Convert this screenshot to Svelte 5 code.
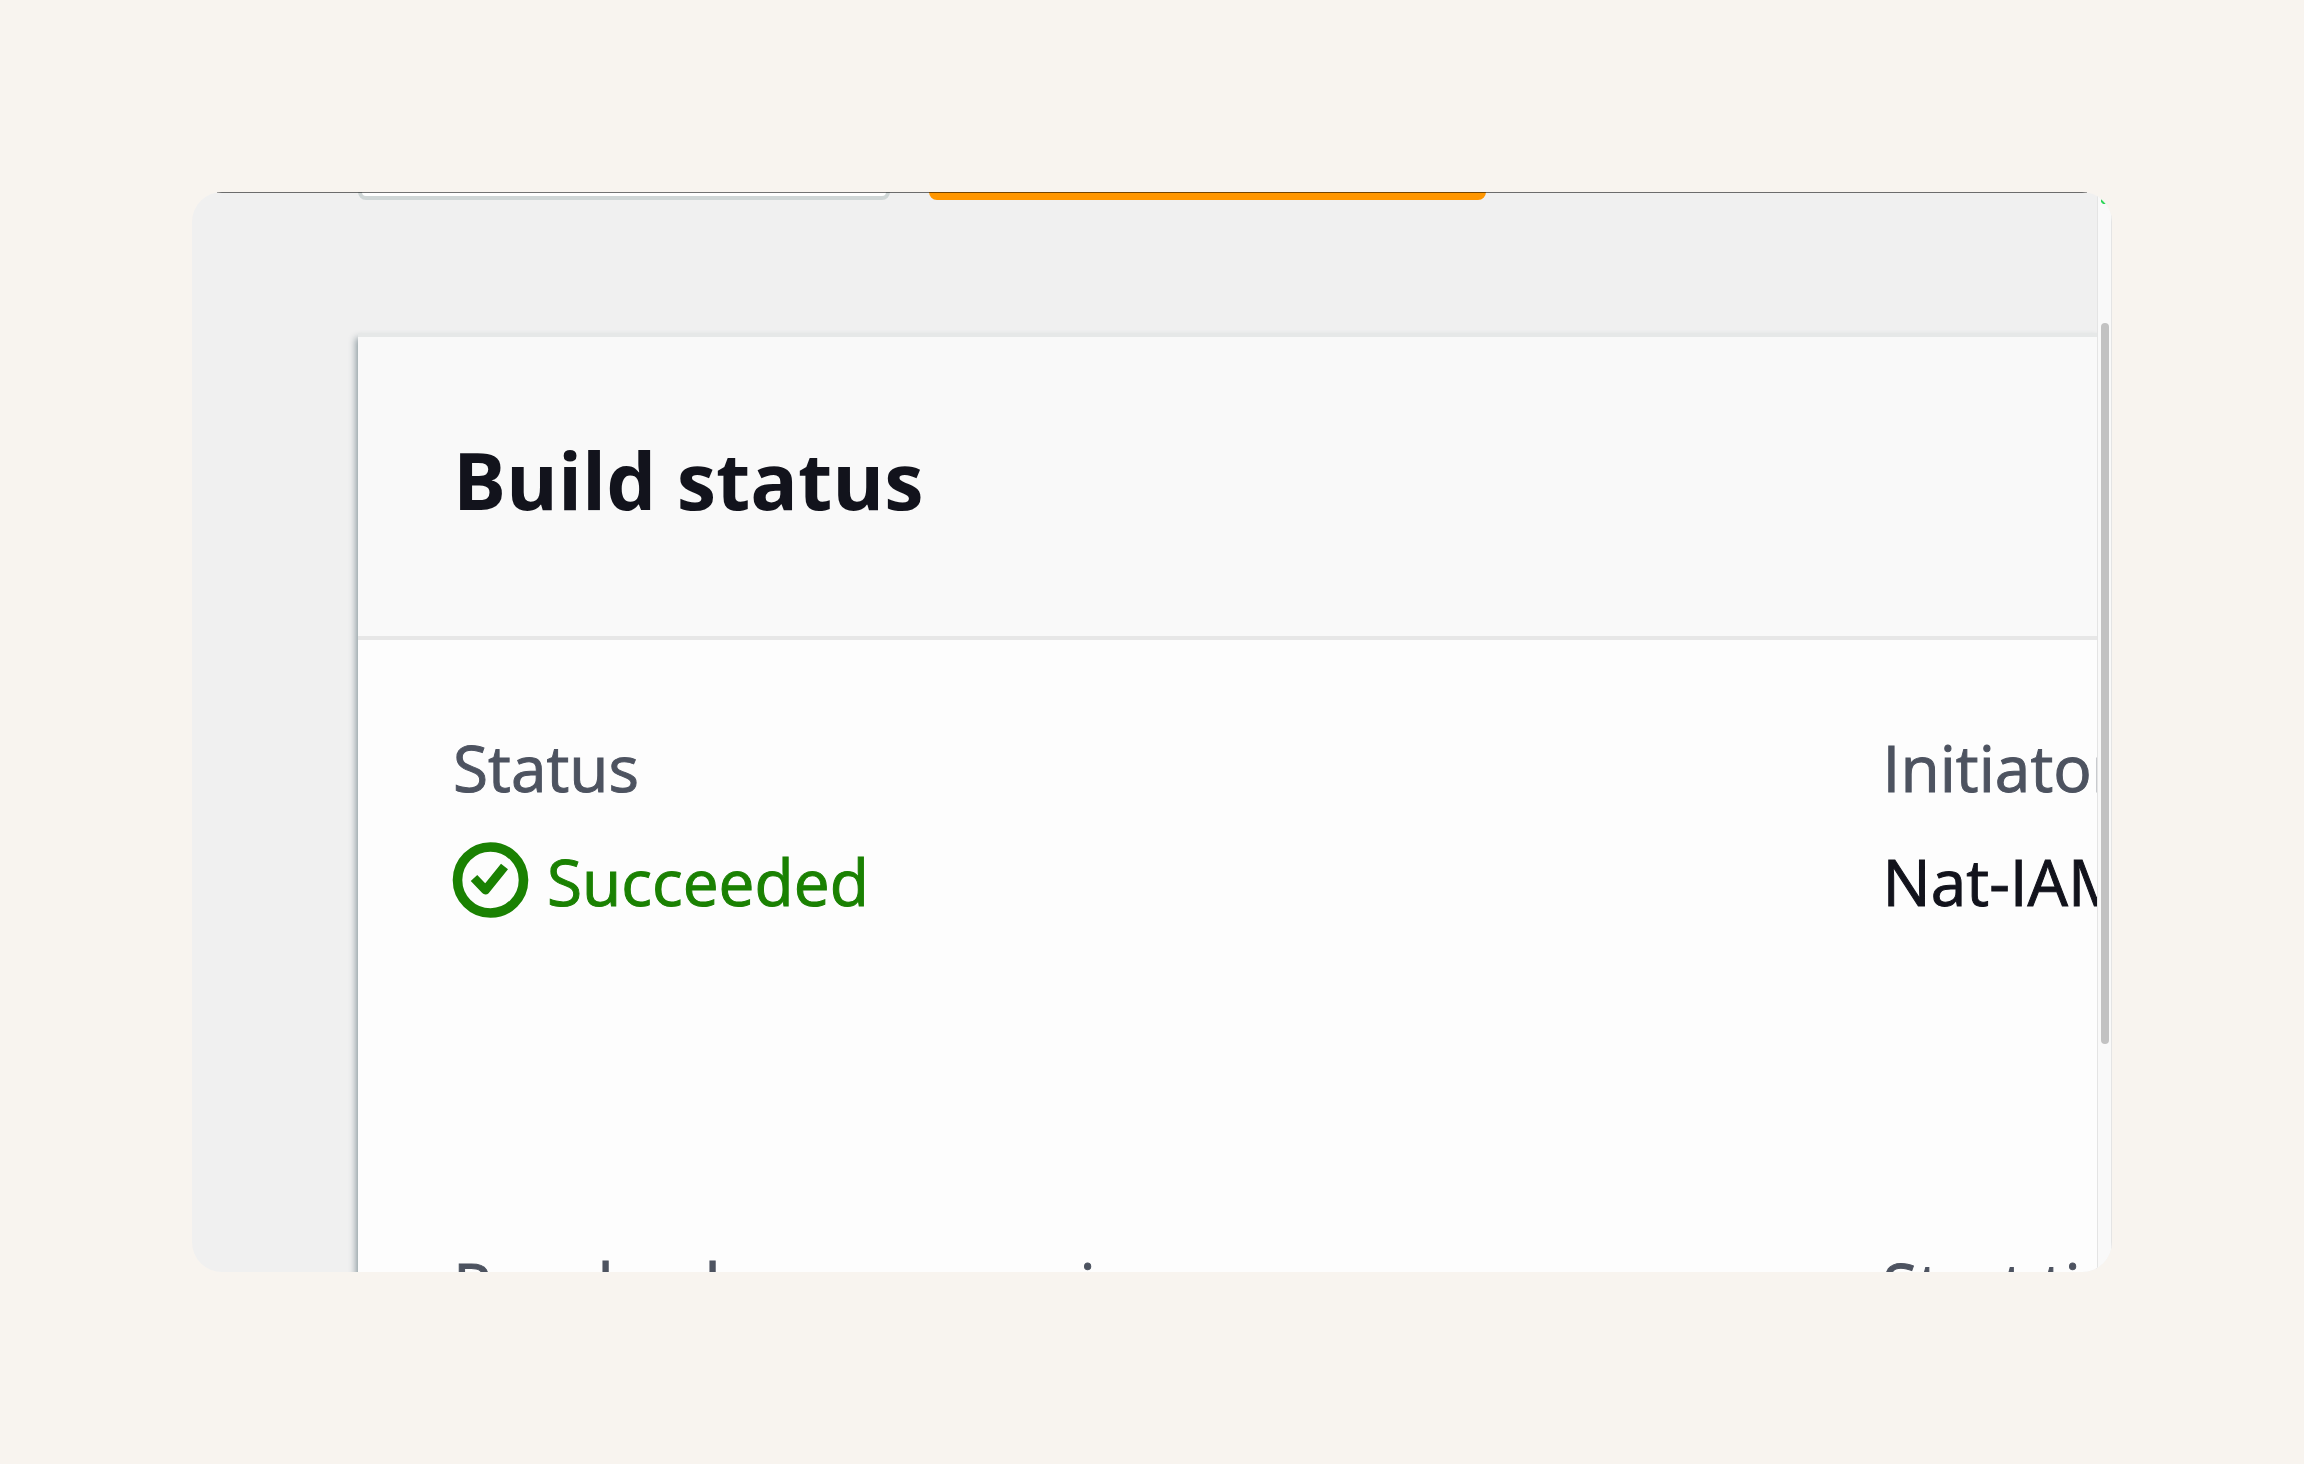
<script lang="ts">
  type Field = {
    label: string;
    value: string;
    ok?: boolean;
  };

  const title = "Build status";

  const fields: Field[] = [
    { label: "Status", value: "Succeeded", ok: true },
    { label: "Initiator", value: "Nat-IAM" },
    { label: "Resolved source version", value: "" },
    { label: "Start time", value: "" },
  ];
</script>

<main class="stage">
  <div class="window">
    <div class="viewport">
      <div class="actions">
        <button type="button" class="btn" aria-label="Stop build"></button>
        <button type="button" class="btn primary" aria-label="Retry build"></button>
      </div>

      <section class="card">
        <header>
          <h2>{title}</h2>
        </header>
        <dl>
          {#each fields as field}
            <div class="field">
              <dt>{field.label}</dt>
              <dd class:ok={field.ok}>
                {#if field.ok}
                  <svg viewBox="0 0 76 76" aria-hidden="true">
                    <circle cx="37.5" cy="36" r="33" stroke-width="9.6" />
                    <path d="M21 34 L32.5 46 L51.5 22.5" stroke-width="9" stroke-linejoin="round" />
                  </svg>
                {/if}
                {field.value}
              </dd>
            </div>
          {/each}
        </dl>
      </section>
    </div>

    <div class="track">
      <span class="dot"></span>
      <div class="thumb"></div>
    </div>
  </div>
</main>

<style>
  :global(body) {
    background: #f8f4ef;
  }

  .stage {
    padding: 192px;
    font-family: "Open Sans", "Noto Sans", sans-serif;
    color: #12131c;
  }

  .window {
    position: relative;
    display: flex;
    aspect-ratio: 16 / 9;
    border-radius: 30px;
    overflow: hidden;
    background: #f0f0f0;
  }

  /* thin edge along the top of the window */
  .window::before {
    content: "";
    position: absolute;
    top: 0;
    left: 25px;
    right: 25px;
    height: 1px;
    background: rgba(0, 0, 0, 0.55);
  }

  .viewport {
    flex: 1;
    min-width: 0;
    height: 100%;
    overflow: hidden;
    display: flex;
    flex-direction: column;
  }

  .actions {
    display: flex;
    flex: none;
    align-items: flex-end;
    gap: 39px;
    height: 8px;
    padding-left: 166px;
  }

  .btn {
    flex: none;
    box-sizing: border-box;
    width: 532px;
    height: 96px;
    padding: 0;
    border: 4px solid #cfd6d6;
    border-radius: 8px;
    background: #fff;
  }

  .btn.primary {
    width: 557px;
    border-color: #ff9600;
    background: #ff9600;
  }

  .card {
    flex: none;
    margin: 137px 0 0 166px;
    background: #fdfdfd;
    box-shadow:
      0 -4px 0 #e6e8e8,
      -1px 2px 7px 1px #8b999f;
  }

  header {
    padding: 81px 95px 95px;
    border-bottom: 4px solid #e7e7e7;
    background: #f9f9f9;
  }

  h2 {
    margin: 0;
    font-size: 79px;
    font-weight: 700;
    line-height: 123px;
  }

  dl {
    display: grid;
    grid-template-columns: minmax(0, 20fr) minmax(0, 3fr);
    row-gap: 290px;
    margin: 0;
    padding: 71px 0 96px 95px;
  }

  .field {
    white-space: nowrap;
    font-size: 64px;
    line-height: 114px;
    -webkit-text-stroke: 1px currentColor;
  }

  dt {
    color: #4d5360;
  }

  dd {
    display: flex;
    align-items: center;
    gap: 18px;
    margin: 0;
  }

  .ok {
    color: #1a8102;
  }

  svg {
    width: 76px;
    height: 76px;
    fill: none;
    stroke: currentColor;
    overflow: visible;
  }

  .track {
    position: relative;
    flex: none;
    box-sizing: border-box;
    width: 15px;
    height: 100%;
    padding: 131px 2px 0 3px;
    border: solid #e4e4e4;
    border-width: 0 1px;
    background: #f9f9f9;
  }

  .thumb {
    width: 8px;
    height: 76%;
    border-radius: 4px;
    background: #c2c2c2;
  }

  .dot {
    position: absolute;
    top: 7px;
    left: 3px;
    width: 5px;
    height: 5px;
    background: #2fd65a;
    clip-path: polygon(0 0, 100% 100%, 40% 100%, 0 60%);
  }
</style>
